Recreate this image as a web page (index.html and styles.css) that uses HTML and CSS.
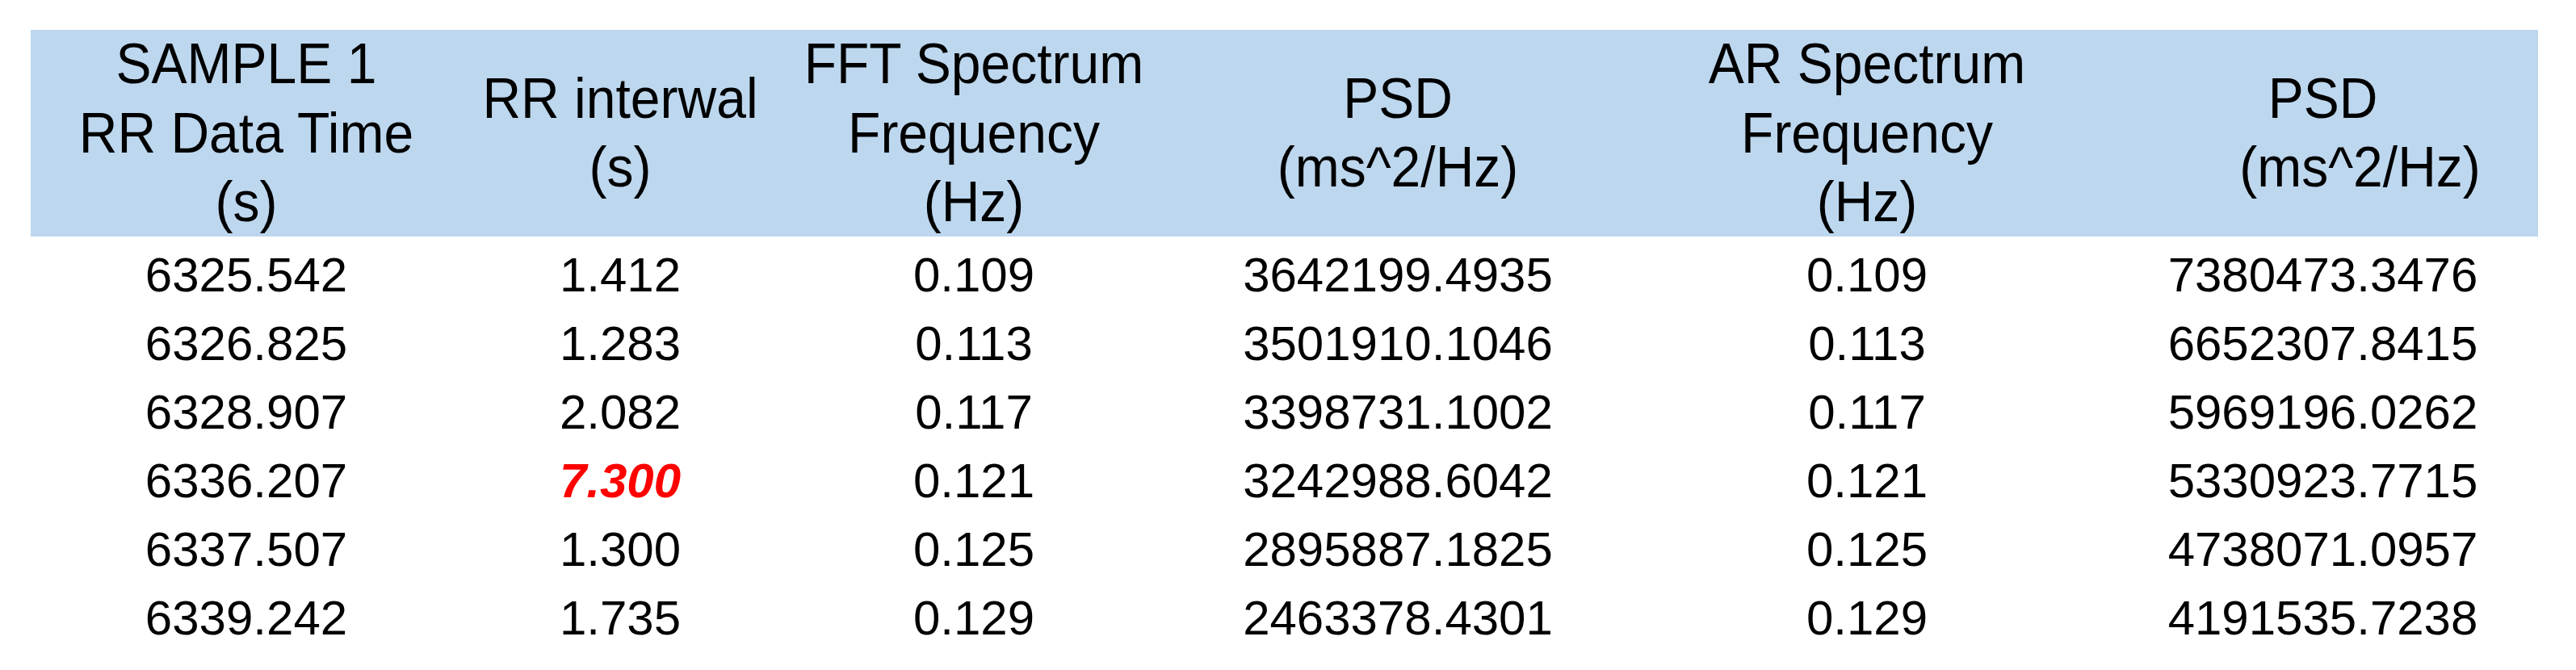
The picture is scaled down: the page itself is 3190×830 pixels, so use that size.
FILE: index.html
```html
<!DOCTYPE html>
<html>
<head>
<meta charset="utf-8">
<link rel="stylesheet" href="styles.css">
</head>
<body>
<div class="sheet">
  <div class="row head">
    <div class="cell"><span>SAMPLE 1</span><span>RR Data Time</span><span>(s)</span></div>
    <div class="cell"><span>RR interwal</span><span>(s)</span></div>
    <div class="cell"><span>FFT Spectrum</span><span>Frequency</span><span>(Hz)</span></div>
    <div class="cell"><span>PSD</span><span>(ms^2/Hz)</span></div>
    <div class="cell"><span>AR Spectrum</span><span>Frequency</span><span>(Hz)</span></div>
    <div class="cell"><span>PSD</span><span class="shift">(ms^2/Hz)</span></div>
  </div>
  <div class="row data"><div class="cell">6325.542</div><div class="cell">1.412</div><div class="cell">0.109</div><div class="cell">3642199.4935</div><div class="cell">0.109</div><div class="cell">7380473.3476</div></div>
  <div class="row data"><div class="cell">6326.825</div><div class="cell">1.283</div><div class="cell">0.113</div><div class="cell">3501910.1046</div><div class="cell">0.113</div><div class="cell">6652307.8415</div></div>
  <div class="row data"><div class="cell">6328.907</div><div class="cell">2.082</div><div class="cell">0.117</div><div class="cell">3398731.1002</div><div class="cell">0.117</div><div class="cell">5969196.0262</div></div>
  <div class="row data"><div class="cell">6336.207</div><div class="cell outlier">7.300</div><div class="cell">0.121</div><div class="cell">3242988.6042</div><div class="cell">0.121</div><div class="cell">5330923.7715</div></div>
  <div class="row data"><div class="cell">6337.507</div><div class="cell">1.300</div><div class="cell">0.125</div><div class="cell">2895887.1825</div><div class="cell">0.125</div><div class="cell">4738071.0957</div></div>
  <div class="row data"><div class="cell">6339.242</div><div class="cell">1.735</div><div class="cell">0.129</div><div class="cell">2463378.4301</div><div class="cell">0.129</div><div class="cell">4191535.7238</div></div>
</div>
</body>
</html>
```
FILE: styles.css
```css
html, body {
  margin: 0;
  padding: 0;
  background: #ffffff;
}

body {
  font-family: "Liberation Sans", Arial, sans-serif;
  color: #000000;
}

.sheet {
  margin: 37px 0 0 38px;
  width: 3105px;
}

.row {
  display: grid;
  grid-template-columns: 534px 392px 484px 566px 596px 533px;
}

.head {
  height: 256px;
  background: #bdd7ee;
  margin-bottom: 5px;
  font-size: 66px;
  line-height: 85.5px;
}

.head .cell {
  display: flex;
  flex-direction: column;
  justify-content: center;
  align-items: center;
  text-align: center;
  white-space: nowrap;
}

.head .cell span {
  display: block;
  transform: scaleY(1.06);
}

.head .cell .shift {
  padding-left: 92px;
}

.data {
  height: 85px;
  font-size: 60px;
  line-height: 85px;
}

.data .cell {
  text-align: center;
  white-space: nowrap;
}

.outlier {
  color: #ff0000;
  font-weight: bold;
  font-style: italic;
}
```
